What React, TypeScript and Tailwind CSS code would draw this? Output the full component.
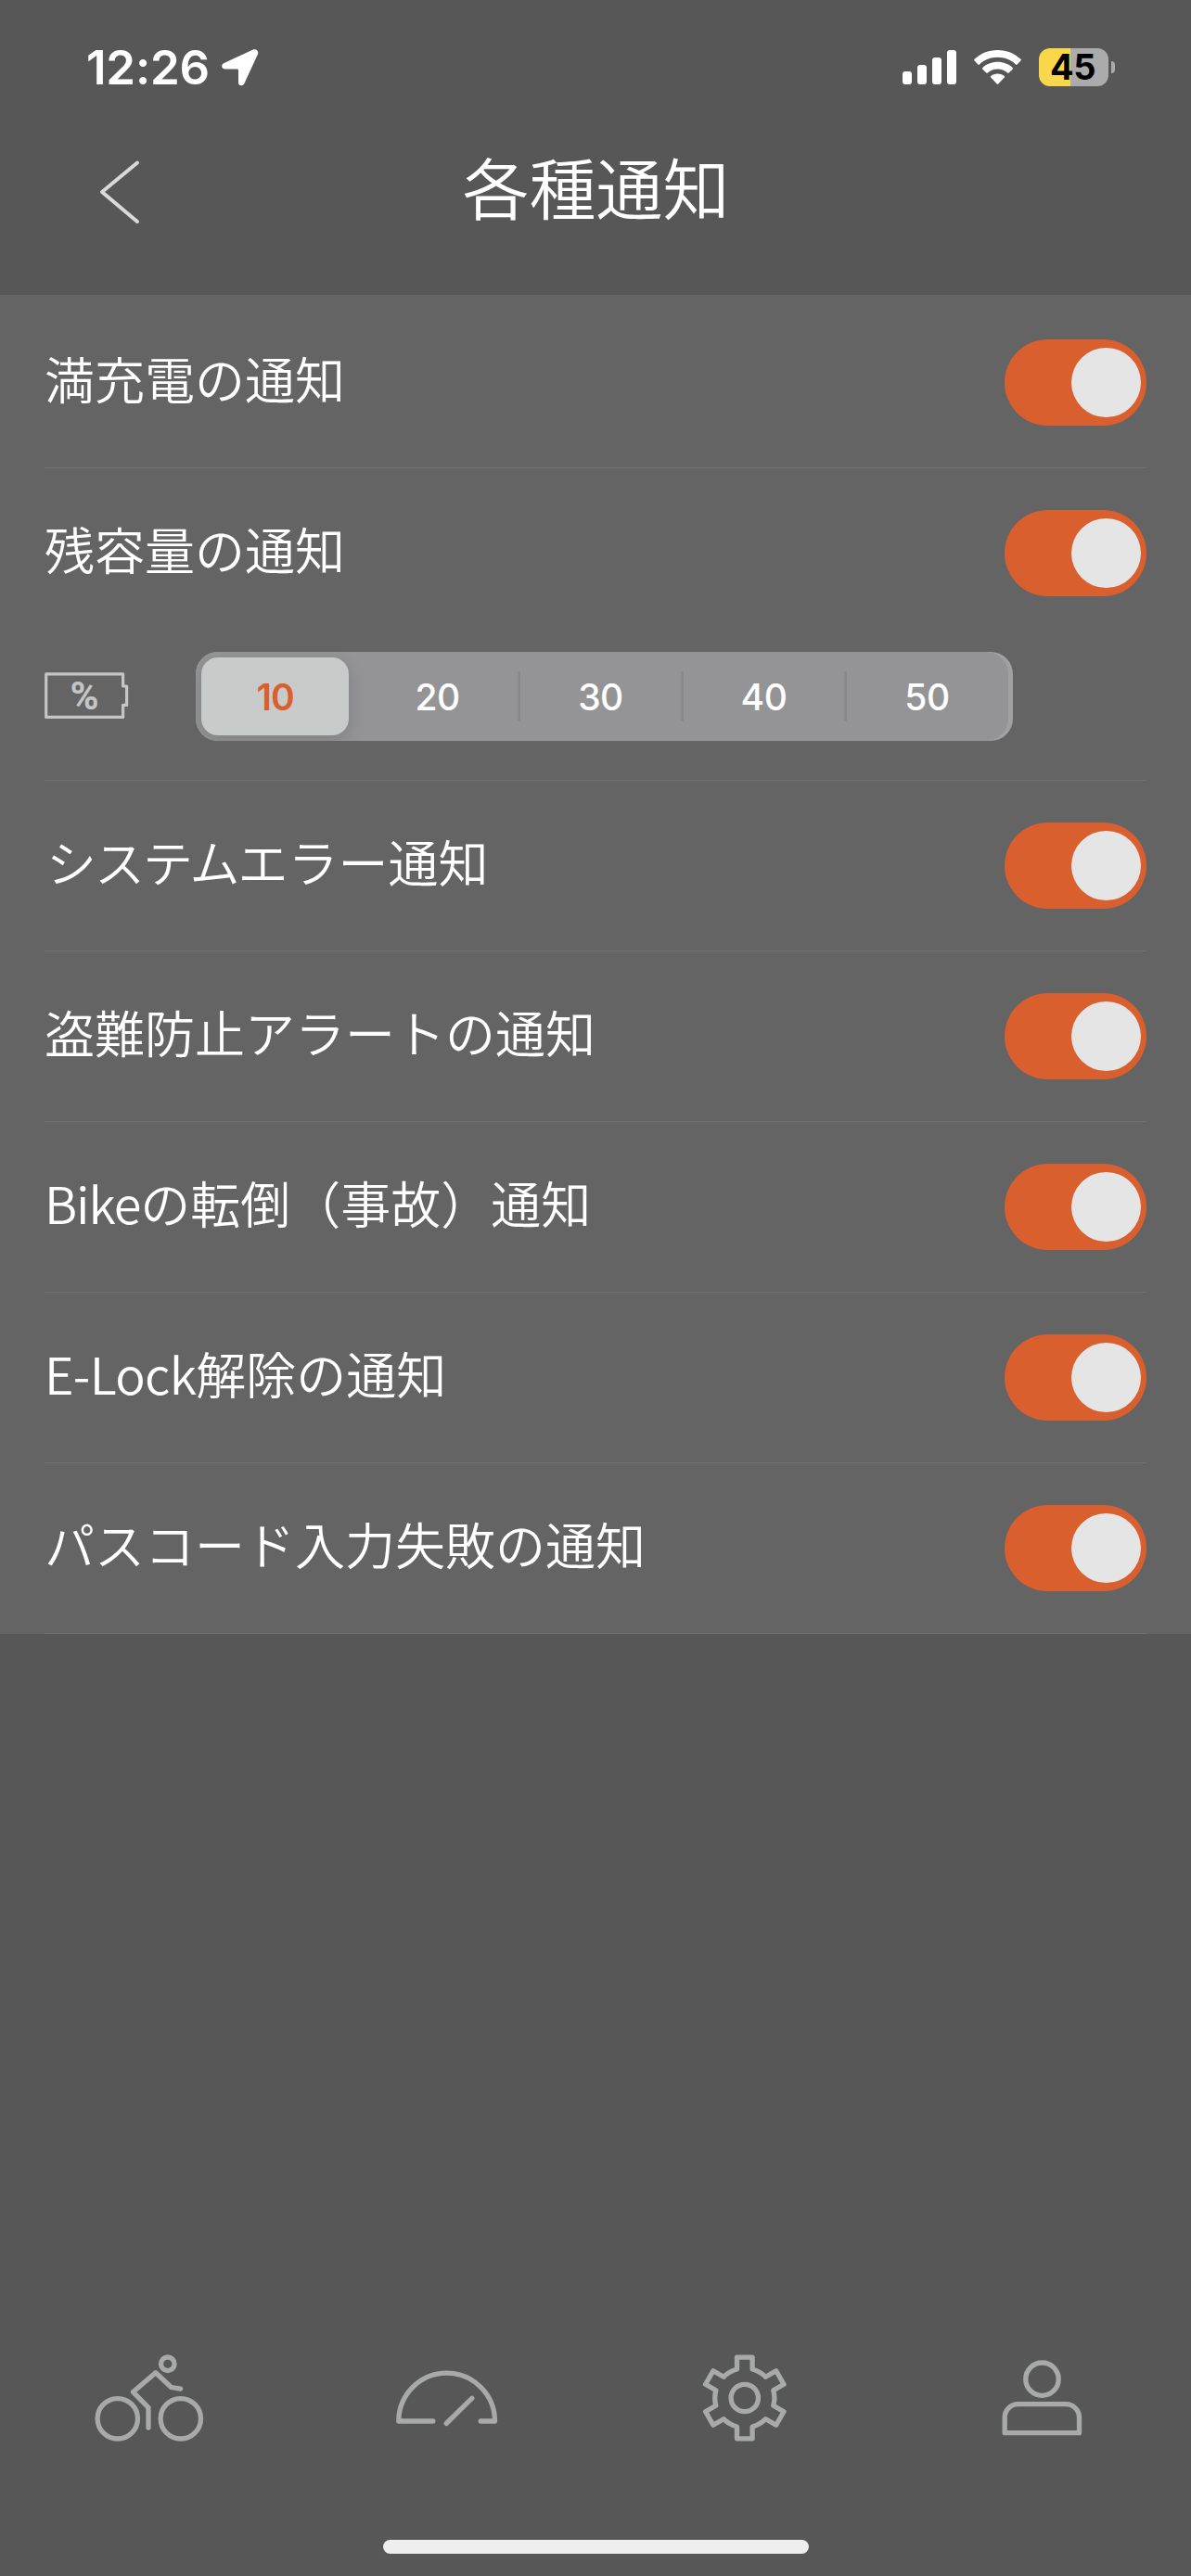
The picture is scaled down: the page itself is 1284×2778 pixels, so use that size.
import { ReactNode, useState } from "react";
import clsx from "clsx";

type Row = {
    id: string;
    label: ReactNode;
};

const rows: Row[] = [
    { id: "full", label: "満充電の通知" },
    { id: "remaining", label: "残容量の通知" },
    {
        id: "system",
        label: (
            <>
                <span className="pl-0.5 tracking-[-2px]">システム</span>エラー通知
            </>
        ),
    },
    { id: "theft", label: "盗難防止アラートの通知" },
    {
        id: "fall",
        label: (
            <>
                <span className="tracking-[-1.1px]">Bike</span>の転倒（事故）通知
            </>
        ),
    },
    {
        id: "elock",
        label: (
            <>
                <span className="tracking-[-0.7px]">E-Lock</span>解除の通知
            </>
        ),
    },
    { id: "passcode", label: "パスコード入力失敗の通知" },
];

const levels = [10, 20, 30, 40, 50];

function StatusBar() {
    return (
        <div className="flex h-[138px] items-start justify-between pr-[82px] pl-[93px]">
            <div className="flex items-center pt-[42px] text-white">
                <span className="w-[146px] font-['Inter'] text-[51px] leading-[62px] font-semibold tracking-[-0.2px]">
                    12:26
                </span>
                <svg width="40" height="40" viewBox="0 0 40 40" fill="currentColor">
                    <path d="M33.8.6 2.2 15.2C-1 16.7-.2 21.4 3.4 21.4H16.6Q18 21.4 18 22.8V36C18 39.8 22.8 40.4 24.4 37L38.9 5.6C40.3 2.3 37.2-.9 33.8.6Z" />
                </svg>
            </div>
            <div className="mt-[52px] flex h-[41px] items-center">
                <svg width="58" height="37" viewBox="0 0 58 37" fill="#fff">
                    <rect x="0" y="23" width="10" height="14" rx="3" />
                    <rect x="16" y="16" width="10" height="21" rx="3" />
                    <rect x="32" y="8" width="10" height="29" rx="3" />
                    <rect x="48" y="0" width="10" height="37" rx="3" />
                </svg>
                <svg
                    className="ml-[19px]"
                    width="51"
                    height="37"
                    viewBox="0 0 51 37"
                    fill="#fff"
                >
                    <path d="M25.5 0C35.3 0 44.1 3.7 50.4 9.8Q51.3 10.7 50.4 11.6L46.6 15.4Q45.8 16.1 45 15.4C39.8 10.5 33 7.8 25.5 7.8S11.2 10.5 6 15.4Q5.2 16.1 4.4 15.4L.6 11.6Q-.3 10.7.6 9.8C6.9 3.7 15.7 0 25.5 0Z" />
                    <path d="M25.5 12.8C31.8 12.8 37.5 15.1 41.6 18.9Q42.5 19.8 41.6 20.7L37.7 24.4Q36.9 25.1 36.1 24.4C33.3 22 29.6 20.5 25.5 20.5S17.7 22 14.9 24.4Q14.1 25.1 13.3 24.4L9.4 20.7Q8.5 19.8 9.4 18.9C13.5 15.1 19.2 12.8 25.5 12.8Z" />
                    <path d="M25.5 25.4C28.4 25.4 31 26.4 32.8 28Q33.6 28.8 32.8 29.6L26.3 36.4Q25.5 37.2 24.7 36.4L18.2 29.6Q17.4 28.8 18.2 28C20 26.4 22.6 25.4 25.5 25.4Z" />
                </svg>
                <div className="ml-[19px] flex h-[41px] w-[75px] items-center justify-center rounded-[12px] bg-linear-to-r from-[#f8d84a] from-[34px] to-[#ababab] to-[34px]">
                    <span className="pr-0.5 font-['Inter'] text-[38px] leading-[41px] font-bold tracking-[-0.5px] text-black">
                        45
                    </span>
                </div>
                <div className="ml-[3px] h-[13px] w-[4px] rounded-r-full bg-[#ababab]" />
            </div>
        </div>
    );
}

function Header() {
    return (
        <header className="grid h-[180px] grid-cols-[1fr_auto_1fr] items-start">
            <button className="ml-[106px] pt-[34px]" aria-label="戻る">
                <svg
                    width="46"
                    height="70"
                    viewBox="0 0 46 70"
                    fill="none"
                    stroke="#d9dada"
                    strokeWidth="4"
                    strokeLinecap="round"
                    strokeLinejoin="round"
                >
                    <path d="M42 3.5 4 35 42 67" />
                </svg>
            </button>
            <h1 className="pt-2.5 pl-px text-[72px] leading-[104px] font-[350] text-white">
                各種通知
            </h1>
        </header>
    );
}

type ToggleProps = {
    checked: boolean;
    onChange: () => void;
};

function Toggle({ checked, onChange }: ToggleProps) {
    return (
        <button
            role="switch"
            aria-checked={checked}
            onClick={onChange}
            className={clsx(
                "flex h-[93px] w-[153px] items-center rounded-full px-1.5",
                checked ? "justify-end bg-[#d95f2e]" : "justify-start bg-[#8a8a8a]"
            )}
        >
            <span className="size-[75px] rounded-full bg-[#e5e5e5]" />
        </button>
    );
}

function BatteryPercent() {
    return (
        <svg width="92" height="52" viewBox="0 0 92 52">
            <path
                d="M1.7 1.8H84.6V15H88.6V35.4H84.6V48.4H1.7Z"
                fill="none"
                stroke="#c5c5c5"
                strokeWidth="3.2"
                strokeLinejoin="round"
            />
            <text
                x="43"
                y="40"
                textAnchor="middle"
                fill="#c5c5c5"
                className="font-['Roboto'] text-[42px] font-bold"
            >
                %
            </text>
        </svg>
    );
}

function LevelPicker() {
    const [level, setLevel] = useState(10);

    return (
        <div className="flex h-[153px] items-start pt-[15px]">
            <div className="flex h-24 w-[163px] items-center">
                <BatteryPercent />
            </div>
            <div className="h-24 w-[881px] rounded-[24px] bg-[#a0a1a0] pr-[5px]">
                <div className="flex h-24 items-center overflow-hidden rounded-[24px] bg-[#949496] pl-1.5">
                    {levels.map((value, index) => (
                        <div key={value} className="flex items-center">
                            {index > 0 && (
                                <span
                                    className={clsx(
                                        "h-[54px] rounded-full",
                                        index === 1 ? "w-[9px]" : "w-[3px]",
                                        levels[index - 1] === level
                                            ? "bg-transparent"
                                            : "bg-[#89898b]"
                                    )}
                                />
                            )}
                            <button
                                onClick={() => setLevel(value)}
                                className={clsx(
                                    "h-[84px] rounded-[18px] pt-0.5 font-['Inter'] text-[39px]",
                                    index === 0 ? "w-[159px]" : "w-[173px]",
                                    value === level
                                        ? "bg-[#c9cbca] font-semibold tracking-[-1px] text-[#d95f2e] shadow-[0_6px_18px_rgba(0,0,0,0.13)]"
                                        : "font-[450] tracking-[-0.5px] text-white"
                                )}
                            >
                                {value}
                            </button>
                        </div>
                    ))}
                </div>
            </div>
        </div>
    );
}

function NotificationList() {
    const [enabled, setEnabled] = useState<Record<string, boolean>>(
        Object.fromEntries(rows.map((row) => [row.id, true]))
    );

    return (
        <main className="bg-[#646464] px-12 pt-[3px]">
            {rows.map((row) => (
                <div key={row.id} className="border-b border-[#717171]">
                    <div className="flex h-[183px] items-center justify-between">
                        <span className="pb-2.5 text-[54px] leading-[80px] font-[350] text-white">
                            {row.label}
                        </span>
                        <Toggle
                            checked={enabled[row.id]}
                            onChange={() =>
                                setEnabled({ ...enabled, [row.id]: !enabled[row.id] })
                            }
                        />
                    </div>
                    {row.id === "remaining" && <LevelPicker />}
                </div>
            ))}
        </main>
    );
}

function TabIcon({ label, children }: { label: string; children: ReactNode }) {
    return (
        <button className="flex justify-center" aria-label={label}>
            <svg
                width="120"
                height="100"
                viewBox="0 0 120 100"
                fill="none"
                stroke="#a8aaa9"
                strokeWidth="5.3"
                strokeLinecap="round"
                strokeLinejoin="round"
            >
                {children}
            </svg>
        </button>
    );
}

function TabBar() {
    return (
        <nav className="grid h-[203px] grid-cols-4 items-start">
            <TabIcon label="ライド">
                <circle cx="25.8" cy="72.3" r="21.7" />
                <circle cx="93.8" cy="72.3" r="21.7" />
                <circle cx="79.8" cy="13.3" r="7.3" />
                <path d="M93.6 40.1 83.6 38.5 66.8 22.8 42.5 43.6 59 60.3V82" />
            </TabIcon>
            <TabIcon label="メーター">
                <path d="M44.8 75H7.8A51.8 51.8 0 0 1 111.5 75H96.2" />
                <path d="M59.2 77.5 86.8 50.3" />
            </TabIcon>
            <TabIcon label="設定">
                <g transform="translate(59.8 50)">
                    <path d="M-8.3-31V-43.8H8.3V-31A32 32 0 0 1 22.7-22.7L33.9-29.2 42.2-14.8 31-8.3A32 32 0 0 1 31 8.3L42.2 14.8 33.9 29.2 22.7 22.7A32 32 0 0 1 8.3 31V43.8H-8.3V31A32 32 0 0 1-22.7 22.7L-33.9 29.2-42.2 14.8-31 8.3A32 32 0 0 1-31-8.3L-42.2-14.8-33.9-29.2-22.7-22.7A32 32 0 0 1-8.3-31Z" />
                    <circle r="14.7" />
                </g>
            </TabIcon>
            <TabIcon label="アカウント">
                <circle cx="59.5" cy="29.7" r="17.7" />
                <path d="M19.2 87.7V71.2A14.5 14.5 0 0 1 33.7 56.7H85A14.5 14.5 0 0 1 99.5 71.2V87.7Z" />
            </TabIcon>
        </nav>
    );
}

export default function App() {
    return (
        <div className="flex h-[2778px] w-[1284px] flex-col bg-[#575757] font-['Noto_Sans_CJK_JP',sans-serif]">
            <StatusBar />
            <Header />
            <NotificationList />
            <div className="grow" />
            <TabBar />
            <div className="flex h-[39px] justify-center">
                <div className="h-[15px] w-[459px] rounded-full bg-[#eeeeee]" />
            </div>
        </div>
    );
}
